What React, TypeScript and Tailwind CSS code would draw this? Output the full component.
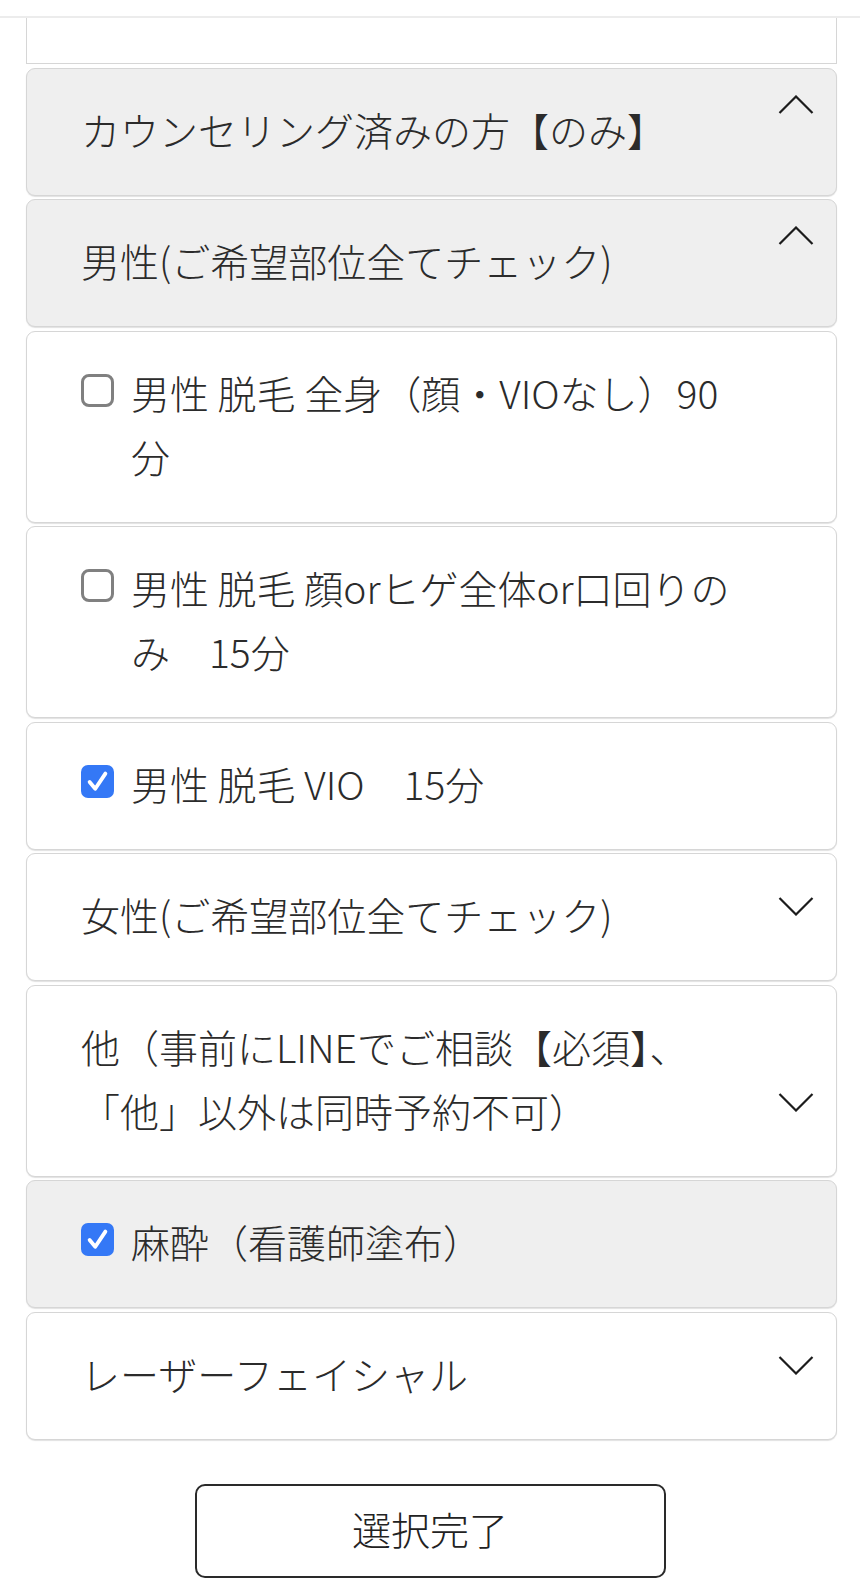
import { ReactNode } from "react";

type Row =
  | { kind: "header"; label: ReactNode; open: boolean; gray?: boolean }
  | { kind: "check"; label: ReactNode; checked: boolean; gray?: boolean };

const rows: Row[] = [
  { kind: "header", label: "カウンセリング済みの方【のみ】", open: true, gray: true },
  { kind: "header", label: "男性(ご希望部位全てチェック)", open: true, gray: true },
  {
    kind: "check",
    label: (
      <>
        男性 脱毛 全身（顔・VIOなし）90
        <br />分
      </>
    ),
    checked: false,
  },
  {
    kind: "check",
    label: (
      <>
        男性 脱毛 顔orヒゲ全体or口回りの
        <br />み　15分
      </>
    ),
    checked: false,
  },
  { kind: "check", label: "男性 脱毛 VIO　15分", checked: true },
  { kind: "header", label: "女性(ご希望部位全てチェック)", open: false },
  {
    kind: "header",
    label: (
      <>
        他（事前にLINEでご相談【必須】、
        <br />
        「他」以外は同時予約不可）
      </>
    ),
    open: false,
  },
  { kind: "check", label: "麻酔（看護師塗布）", checked: true, gray: true },
  { kind: "header", label: "レーザーフェイシャル", open: false },
];

function Chevron({ open }: { open: boolean }) {
  return (
    <svg width="36" height="36" viewBox="0 0 36 36" fill="none" className="block">
      {open ? (
        <polyline points="1.5,18 18,1.5 34.5,18" stroke="#1c1c1c" strokeWidth="2.2" />
      ) : (
        <polyline points="1.5,18 18,34.5 34.5,18" stroke="#1c1c1c" strokeWidth="2.2" />
      )}
    </svg>
  );
}

function Checkbox({ checked }: { checked: boolean }) {
  if (checked) {
    return (
      <span className="mt-[14px] flex h-[33px] w-[33px] shrink-0 items-center justify-center rounded-[7px] bg-[#3478f6]">
        <svg width="27" height="27" viewBox="0 0 24 24" fill="none">
          <polyline
            points="5,12.5 10,18.5 19,5"
            stroke="#ffffff"
            strokeWidth="3.4"
            strokeLinecap="round"
            strokeLinejoin="round"
          />
        </svg>
      </span>
    );
  }
  return (
    <span className="mt-[14px] block h-[33px] w-[33px] shrink-0 rounded-[8px] border-[3px] border-[#808080] bg-white" />
  );
}

export default function App() {
  return (
    <div className="min-h-screen bg-white pb-[15px] font-['Noto_Sans_CJK_JP','Noto_Sans',sans-serif] font-light text-[#2b2b2b]">
      <div className="h-[18px] border-b-2 border-[#ececec]" />

      <div className="ml-[26px] flex w-[811px] flex-col gap-[3.5px]">
        <div className="h-[46px] border-x border-b border-[#d6d6d6] bg-white" />

        {rows.map((row, i) => (
          <div
            key={i}
            className={`rounded-[9px] border border-[#d6d6d6] pt-[28px] pb-[34px] pl-[54px] pr-[22px] shadow-[0_1px_1px_rgba(0,0,0,0.12)] ${
              row.gray ? "bg-[#efefef]" : "bg-white"
            }`}
          >
            {row.kind === "header" ? (
              <div className="flex items-end justify-between">
                <p className="text-[39px] leading-[64px]">{row.label}</p>
                <div className="-mt-[5px] mb-[30px] shrink-0">
                  <Chevron open={row.open} />
                </div>
              </div>
            ) : (
              <div className="flex items-start gap-[17px]">
                <Checkbox checked={row.checked} />
                <p className="text-[39px] leading-[64px]">{row.label}</p>
              </div>
            )}
          </div>
        ))}
      </div>

      <div className="mt-[44px] flex justify-center">
        <button className="h-[94px] w-[471px] rounded-[10px] border-2 border-[#2a2a2a] bg-white pb-[4px] text-[39px] font-light text-[#222]">
          選択完了
        </button>
      </div>
    </div>
  );
}
